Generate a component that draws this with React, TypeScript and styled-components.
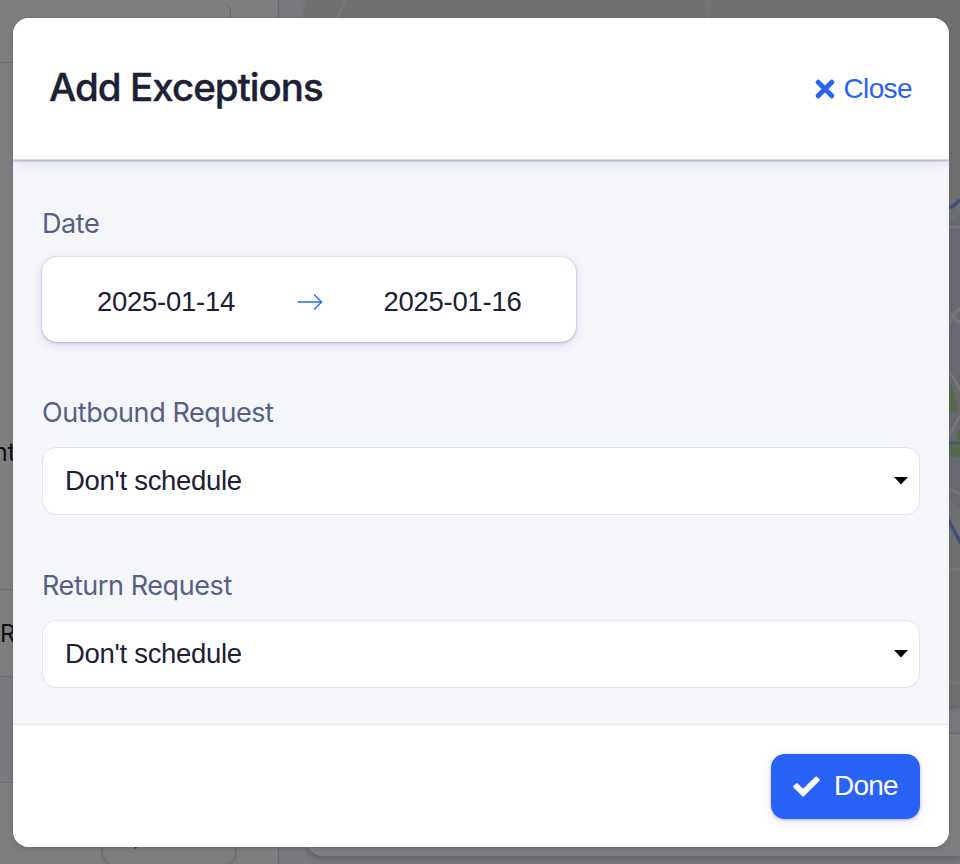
import React from "react";
import styled, { createGlobalStyle } from "styled-components";

const GlobalStyle = createGlobalStyle`
  *, *::before, *::after { box-sizing: border-box; }
  body { margin: 0; overflow: hidden; }
  button { border: 0; background: none; padding: 0; margin: 0; }
`;

const sans = `"Liberation Sans", Arial, sans-serif`;
const ui = `Inter, "Liberation Sans", sans-serif`;

const Viewport = styled.div`
  position: relative;
  width: 960px;
  height: 864px;
  overflow: hidden;
  font-family: ${sans};
  color: #1c2135;
`;

/* Page behind the dialog */
const Page = styled.div`
  display: grid;
  grid-template-columns: 279px 1fr;
  column-gap: 27px;
  width: 960px;
  height: 864px;
  background: #f3f4fa;
`;

const Sidebar = styled.aside`
  display: flex;
  flex-direction: column;
  background: #fff;
  border-right: 1px solid #d2d2e0;
  overflow: hidden;
`;

const SideRow = styled.div<{ $h: number; $muted?: boolean; $top?: number }>`
  flex: none;
  display: flex;
  align-items: center;
  height: ${(p) => p.$h}px;
  padding-top: ${(p) => p.$top ?? 0}px;
  background: ${(p) => (p.$muted ? "#f6f7fb" : "#fff")};
  border-bottom: 1px solid #dcdce8;
`;

const TopBox = styled.div`
  width: 231px;
  height: 63px;
  border-right: 1px solid #d0d0de;
  border-top-right-radius: 14px;
`;

const SideText = styled.span<{ $shift: number; $size: number }>`
  font-family: ${ui};
  font-size: ${(p) => p.$size}px;
  margin-left: ${(p) => p.$shift}px;
  white-space: nowrap;
`;

const SideButton = styled.div`
  width: 134px;
  height: 66px;
  margin: 17px 0 0 102px;
  padding-left: 29px;
  border: 1px solid #d0d0de;
  border-radius: 14px;
  box-shadow: 0 2px 5px rgba(70, 60, 120, 0.2);
  font-size: 26px;
  line-height: 71px;
`;

const Main = styled.main`
  display: flex;
  flex-direction: column;
  gap: 27px;
`;

const MapCard = styled.div`
  height: 706px;
  box-shadow: 0 2px 5px rgba(70, 60, 120, 0.3);
  svg { display: block; }
`;

const DetailCard = styled.div`
  height: 124px;
  background: #fff;
  border: 1px solid #d2d2e0;
  border-right: 0;
  border-bottom-left-radius: 16px;
  box-shadow: 0 2px 5px rgba(70, 60, 120, 0.3);
`;

const Backdrop = styled.div`
  position: absolute;
  inset: 0;
  padding: 18px 11px 17px 13px;
  background: rgba(0, 0, 0, 0.5);
`;

/* Dialog */
const Dialog = styled.section`
  display: flex;
  flex-direction: column;
  height: 829px;
  border-radius: 16px;
  background: #f4f6fa;
  overflow: hidden;
  box-shadow: 0 1px 3px rgba(76, 68, 110, 0.3), 0 3px 12px rgba(76, 68, 110, 0.14);
`;

const Header = styled.header`
  flex: none;
  display: flex;
  justify-content: space-between;
  align-items: center;
  height: 142px;
  padding: 0 37px 0 36px;
  background: #fff;
  border-bottom: 1px solid #dcdbeb;
  box-shadow: 0 1px 2px rgba(76, 63, 145, 0.38), 0 2px 12px rgba(76, 63, 145, 0.13);
`;

const Title = styled.h1`
  margin: 0 0 3px;
  font-family: ${ui};
  font-weight: 500;
  font-size: 38.5px;
  line-height: 48px;
  letter-spacing: -0.96px;
  -webkit-text-stroke: 0.4px currentColor;
`;

const CloseButton = styled.button`
  display: flex;
  align-items: center;
  gap: 8px;
  font-family: ${sans};
  font-size: 28px;
  line-height: 32px;
  letter-spacing: -0.6px;
  color: #2962f6;
`;

const Body = styled.div`
  flex: 1;
  display: flex;
  flex-direction: column;
  gap: 55px;
  padding: 48px 29px 0;
`;

const Field = styled.div<{ $gap: number }>`
  display: flex;
  flex-direction: column;
  gap: ${(p) => p.$gap}px;
`;

const Label = styled.label`
  font-family: ${ui};
  font-size: 27px;
  line-height: 32px;
  letter-spacing: -0.42px;
  color: #566087;
`;

const DateRange = styled.div`
  display: grid;
  grid-template-columns: 248px 39px 247px;
  align-items: center;
  justify-items: center;
  width: 534px;
  height: 85px;
  padding-top: 4px;
  background: #fff;
  border-radius: 15px;
  box-shadow: 0 0 1px rgba(76, 63, 145, 0.3), 0 1px 3px rgba(76, 63, 145, 0.35), 0 3px 12px rgba(76, 63, 145, 0.1);
`;

const DateText = styled.span`
  font-size: 27.5px;
  line-height: 32px;
  letter-spacing: -0.25px;
`;

const Select = styled.div`
  display: flex;
  justify-content: space-between;
  align-items: center;
  height: 68px;
  padding: 0 11px 0 22px;
  background: #fff;
  border: 1px solid #e1e3ed;
  border-radius: 14px;
  font-size: 27.5px;
  line-height: 32px;
  letter-spacing: -0.3px;
`;

const Footer = styled.footer`
  flex: none;
  display: flex;
  justify-content: flex-end;
  height: 123px;
  padding: 29px 29px 0;
  background: #fff;
  border-top: 1px solid #e1e3ee;
`;

const DoneButton = styled.button`
  display: flex;
  align-items: center;
  gap: 14px;
  width: 149px;
  height: 65px;
  padding: 0 0 1px 22px;
  border-radius: 14px;
  background: #2962f6;
  color: #fff;
  font-family: ${sans};
  font-size: 28px;
  line-height: 32px;
  letter-spacing: -0.8px;
  box-shadow: 0 1px 3px rgba(76, 63, 145, 0.35), 0 3px 12px rgba(76, 63, 145, 0.12);
  svg { margin-top: 1px; }
`;

const CityMap = () => (
  <svg width="654" height="706" viewBox="306 0 654 706">
    <rect x="306" width="654" height="706" fill="#dfe4e1" />
    <path d="M930 230L960 215V510L930 480Z" fill="#d2d5e3" />
    <path d="M948 380Q957 394 958 411L948 412ZM957 430H960V458L948 456V446L957 444Z" fill="#b0d898" />
    <path d="M948 444Q954 441 960 444" stroke="#9eb7d5" strokeWidth="3.5" fill="none" />
    <g stroke="#f0f1f1" strokeWidth="2.6" fill="none">
      <path d="M332 30L347 -5M708 0V30M940 227H960M940 569.5H960M940 485L960 494M940 679L960 684" />
      <path d="M943 306L960 323M947 333Q951 314 960 309M948 370Q957 382 960 391M947 440Q957 421 960 416" />
    </g>
    <path d="M945 207H952L960 200M947 517L961 544" stroke="#7d9ffc" strokeWidth="3.5" fill="none" />
  </svg>
);

const CloseIcon = () => (
  <svg width="20" height="20" viewBox="0 0 20 20" fill="none" stroke="currentColor" strokeWidth="4.9" strokeLinecap="round">
    <path d="M3.2 3.2L16.8 16.8M16.8 3.2L3.2 16.8" />
  </svg>
);

const ArrowIcon = () => (
  <svg width="26" height="18" viewBox="0 0 26 18" fill="none" stroke="#2962f6" strokeWidth="1.3">
    <path d="M.8 9H24.7M17 1.5L24.7 9L17 16.5" />
  </svg>
);

const CaretIcon = () => (
  <svg width="14" height="8" viewBox="0 0 14 8">
    <path d="M0 0H14L7 7.5Z" fill="#000" />
  </svg>
);

const CheckIcon = () => (
  <svg width="27" height="21" viewBox="0 0 27 21">
    <path d="M.5 11.4Q-.3 10.6.5 9.8L3 7.4Q3.8 6.7 4.6 7.4L10.1 12.8L22.4.8Q23.2.1 24 .8L26.5 3.2Q27.2 4 26.5 4.8L10.9 20.2Q10.1 20.9 9.3 20.2Z" fill="currentColor" />
  </svg>
);

const requests = ["Outbound Request", "Return Request"];

export default function App() {
  return (
    <Viewport>
      <GlobalStyle />
      <Page aria-hidden="true">
        <Sidebar>
          <SideRow $h={63}><TopBox /></SideRow>
          <SideRow $h={527} $top={252}><SideText $shift={-7} $size={25}>nt</SideText></SideRow>
          <SideRow $h={87}><SideText $shift={0} $size={24}>R</SideText></SideRow>
          <SideRow $h={106} $muted />
          <SideButton>,</SideButton>
        </Sidebar>
        <Main>
          <MapCard><CityMap /></MapCard>
          <DetailCard />
        </Main>
      </Page>
      <Backdrop>
        <Dialog role="dialog" aria-label="Add Exceptions">
          <Header>
            <Title>Add Exceptions</Title>
            <CloseButton><CloseIcon />Close</CloseButton>
          </Header>
          <Body>
            <Field $gap={17}>
              <Label>Date</Label>
              <DateRange>
                <DateText>2025-01-14</DateText>
                <ArrowIcon />
                <DateText>2025-01-16</DateText>
              </DateRange>
            </Field>
            {requests.map((name) => (
              <Field $gap={18} key={name}>
                <Label>{name}</Label>
                <Select>Don't schedule<CaretIcon /></Select>
              </Field>
            ))}
          </Body>
          <Footer>
            <DoneButton><CheckIcon />Done</DoneButton>
          </Footer>
        </Dialog>
      </Backdrop>
    </Viewport>
  );
}
